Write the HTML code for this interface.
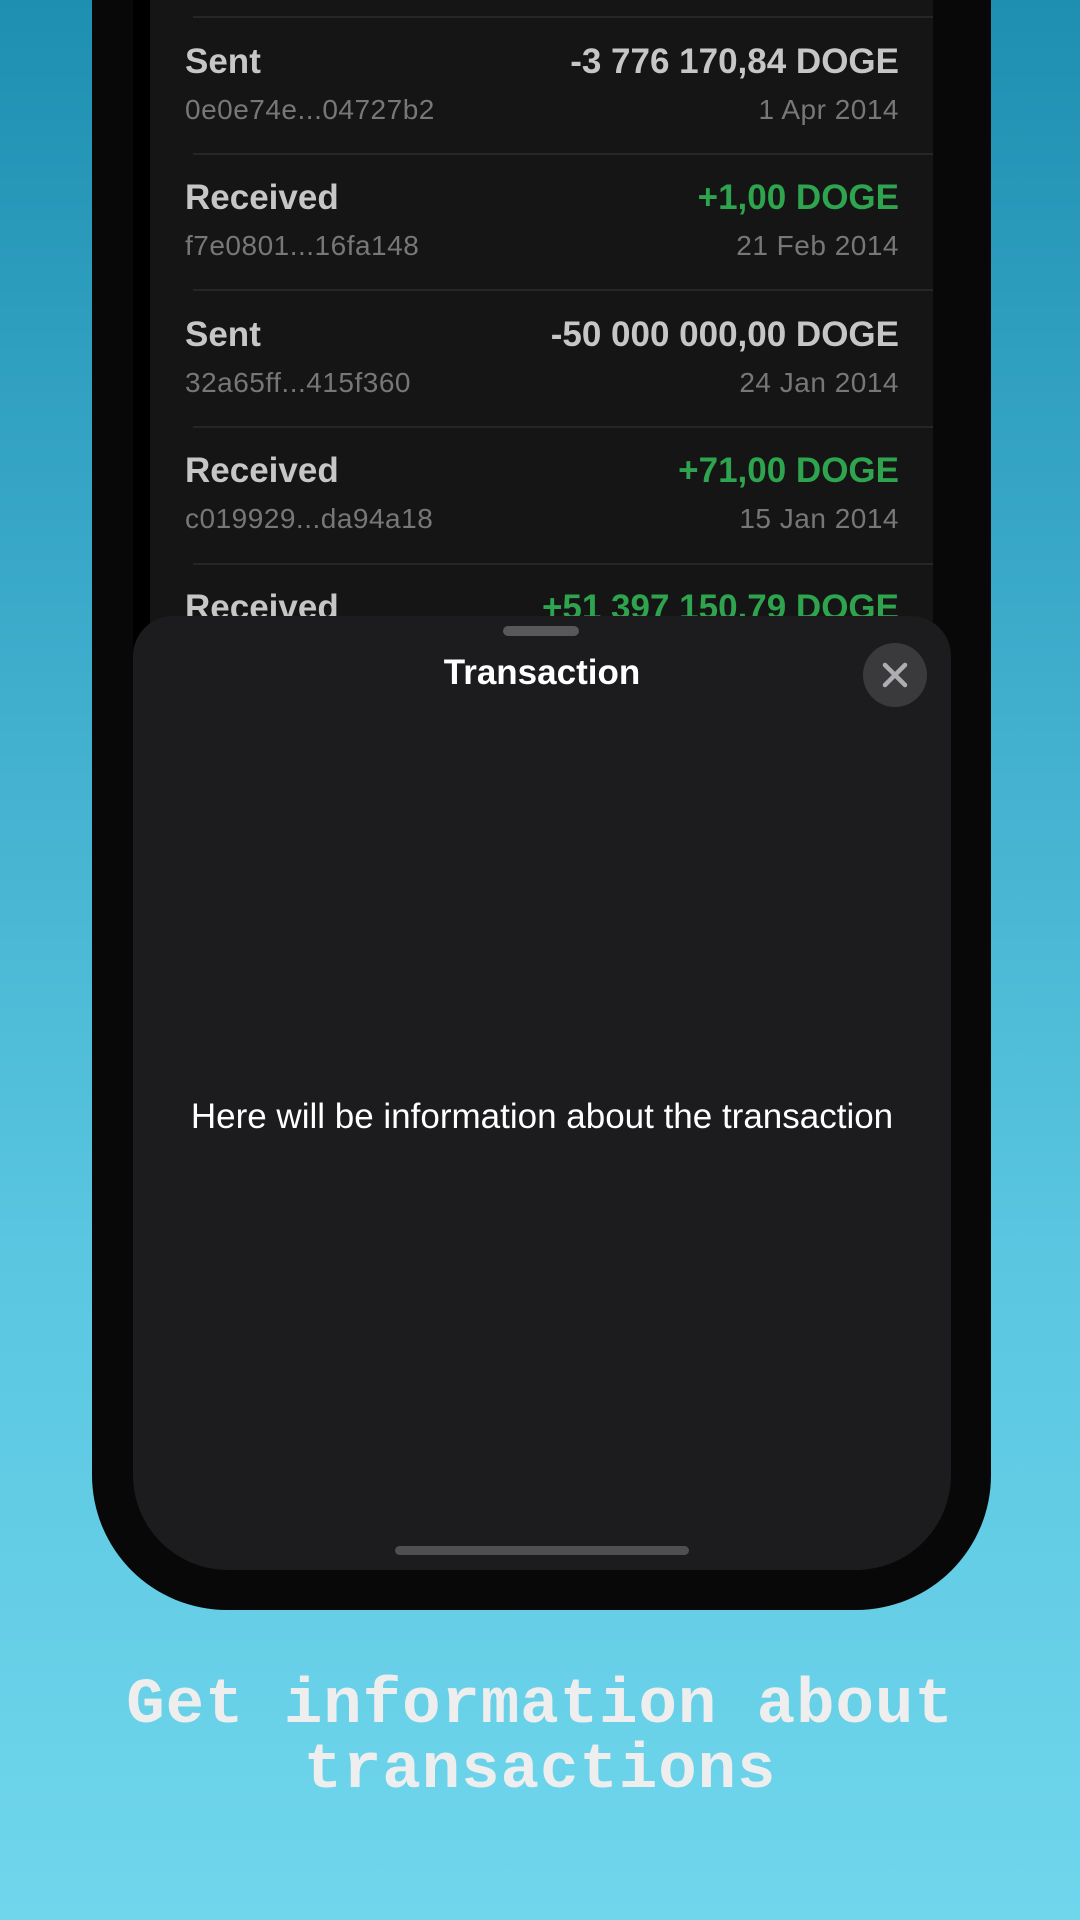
<!DOCTYPE html>
<html><head><meta charset="utf-8"><style>
*{margin:0;padding:0;box-sizing:border-box}
body{width:1080px;height:1920px;overflow:hidden;position:relative;font-family:"Liberation Sans",sans-serif;background:linear-gradient(180deg,#1f8fb1 0%,#3aa9c9 30%,#5ac6e0 65%,#6fd6ec 100%)}
.phone{position:absolute;left:92px;top:-200px;width:899px;height:1810px;background:#080808;border-radius:0 0 135px 135px}
.bezel{position:absolute;left:133px;top:0;width:800px;height:700px;background:#000}
.screen{position:absolute;left:150px;top:0;width:783px;height:700px;background:#151515}
.sep{position:absolute;left:193px;width:740px;height:2px;background:#262626}
.row{position:absolute;left:185px;width:714px;height:136px}
.t{position:absolute;left:0;top:1px;font-size:35px;font-weight:bold;color:#c6c6c6;line-height:40px}
.a{position:absolute;right:0;top:1px;font-size:35px;font-weight:bold;color:#c6c6c6;line-height:40px}
.g{color:#2ea44f}
.h{position:absolute;left:0;top:53px;font-size:28px;color:#777;line-height:32px;letter-spacing:0.5px}
.d{position:absolute;right:0;top:53px;font-size:28px;color:#777;line-height:32px;letter-spacing:0.5px}
.sheet{position:absolute;left:133px;top:616px;width:818px;height:954px;background:#1c1c1e;border-radius:40px 40px 95px 95px}
.grab{position:absolute;left:370px;top:10px;width:76px;height:10px;border-radius:5px;background:#58585a}
.title{position:absolute;left:0;width:818px;top:37px;text-align:center;font-size:35px;font-weight:bold;color:#fff;line-height:40px}
.close{position:absolute;left:730px;top:27px;width:64px;height:64px;border-radius:50%;background:#3a3a3c}
.body{position:absolute;left:0;width:818px;top:481px;text-align:center;font-size:35px;color:#fff;line-height:40px}
.home{position:absolute;left:262px;top:930px;width:294px;height:9px;border-radius:5px;background:#4f4f4f}
.cap{position:absolute;left:0;width:1080px;top:1674px;text-align:center;font-family:"Liberation Mono",monospace;font-weight:bold;font-size:64px;line-height:65px;color:#eeeeee;letter-spacing:1px}
</style></head><body>
<div class="phone"></div>
<div class="bezel"></div>
<div class="screen"></div>
<div class="sep" style="top:16px"></div>
<div class="sep" style="top:153px"></div>
<div class="sep" style="top:289px"></div>
<div class="sep" style="top:426px"></div>
<div class="sep" style="top:563px"></div>
<div class="row" style="top:41px"><div class="t">Sent</div><div class="a">-3 776 170,84 DOGE</div><div class="h">0e0e74e...04727b2</div><div class="d">1 Apr 2014</div></div>
<div class="row" style="top:177px"><div class="t">Received</div><div class="a g">+1,00 DOGE</div><div class="h">f7e0801...16fa148</div><div class="d">21 Feb 2014</div></div>
<div class="row" style="top:314px"><div class="t">Sent</div><div class="a">-50 000 000,00 DOGE</div><div class="h">32a65ff...415f360</div><div class="d">24 Jan 2014</div></div>
<div class="row" style="top:450px"><div class="t">Received</div><div class="a g">+71,00 DOGE</div><div class="h">c019929...da94a18</div><div class="d">15 Jan 2014</div></div>
<div class="row" style="top:587px"><div class="t">Received</div><div class="a g">+51 397 150,79 DOGE</div></div>
<div class="sheet">
<div class="grab"></div>
<div class="title">Transaction</div>
<div class="close"><svg width="64" height="64" viewBox="0 0 64 64"><path d="M22 22L42 42M42 22L22 42" stroke="#aeaeb2" stroke-width="4.5" stroke-linecap="round"/></svg></div>
<div class="body">Here will be information about the transaction</div>
<div class="home"></div>
</div>
<div class="cap">Get information about<br>transactions</div>
</body></html>
